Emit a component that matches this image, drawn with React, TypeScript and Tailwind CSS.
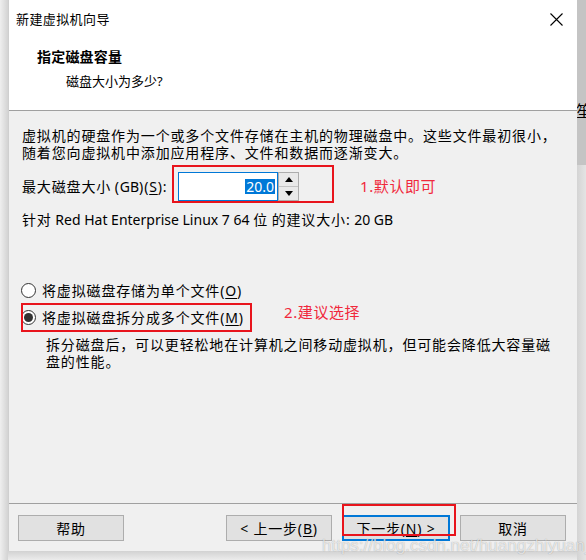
import React from "react";

function T({ s }: { s: string }) {
  const parts = s.split(/([A-Za-z0-9 ]+)/);
  return (
    <>
      {parts.map((p, i) =>
        /^[A-Za-z0-9 ]+$/.test(p) ? (
          <span key={i} className="tracking-normal">
            {p}
          </span>
        ) : (
          <span key={i}>{p}</span>
        )
      )}
    </>
  );
}

function Radio({ checked }: { checked?: boolean }) {
  return (
    <div className="w-[15px] h-[15px] rounded-full border border-[#333333] bg-white flex items-center justify-center shrink-0">
      {checked && <div className="w-[9px] h-[9px] rounded-full bg-[#333333]" />}
    </div>
  );
}

function Btn({ children, primary }: { children: React.ReactNode; primary?: boolean }) {
  return (
    <div
      className={
        primary
          ? "w-[108px] h-[26px] border-2 border-[#0078d7] bg-[#e1e1e1] flex items-center justify-center text-[14px] tracking-[0.8px] whitespace-nowrap"
          : "w-[106px] h-[26px] border border-[#adadad] bg-[#e1e1e1] flex items-center justify-center text-[14px] tracking-[0.8px] whitespace-nowrap"
      }
    >
      {children}
    </div>
  );
}

export default function App() {
  return (
    <div className="w-[586px] h-[560px] flex overflow-hidden bg-[#e6e6e6] relative text-black font-['Noto_Sans','Noto_Sans_CJK_SC',sans-serif]">
      {/* left shadow */}
      <div className="w-[8px] h-full bg-linear-to-r from-[#efefef] to-[#d3d3d3]" />

      <div className="w-[569px] flex flex-col">
        <div className="h-[551px] flex flex-col bg-[#f0f0f0] relative border-l border-[#cfcfcf]">
          {/* header */}
          <div className="h-[111px] bg-white border-b border-[#a0a0a0] flex flex-col shrink-0">
            <div className="h-[38px] flex items-center justify-between pl-[7px] pr-[14px]">
              <span className="text-[13px] tracking-[0.4px] leading-[18px]">新建虚拟机向导</span>
              <svg width="13" height="13" viewBox="0 0 13 13">
                <path d="M0.5 0.5 L12.5 12.5 M12.5 0.5 L0.5 12.5" stroke="#000" strokeWidth="1.1" fill="none" />
              </svg>
            </div>
            <div className="pl-[28px] mt-[9px] text-[14px] font-bold leading-[20px] tracking-[0.2px]">指定磁盘容量</div>
            <div className="pl-[57px] mt-[5px] text-[13px] leading-[18px]">磁盘大小为多少?</div>
          </div>

          {/* body */}
          <div className="flex-1 flex flex-col pl-[13px] text-[14px] tracking-[0.85px] leading-[17px]">
            <p className="mt-[16px] whitespace-nowrap">
              虚拟机的硬盘作为一个或多个文件存储在主机的物理磁盘中。这些文件最初很小，
              <br />
              随着您向虚拟机中添加应用程序、文件和数据而逐渐变大。
            </p>

            <div className="mt-[4px] flex items-start">
              <div className="w-[150px] pt-[13px] whitespace-nowrap">
                <T s="最大磁盘大小 (GB)(" />
                <span className="underline underline-offset-2">S</span>):
              </div>
              <div className="w-[162px] h-[38px] border-2 border-[#e8141c] pl-[4px] pt-[5px]">
                <div className="flex h-[29px]">
                  <div className="w-[100px] h-[29px] border border-[#0078d7] bg-white flex items-center justify-end pr-[2px]">
                    <span className="bg-[#0078d7] text-white text-[14px] leading-[15px] px-[1px] tracking-normal">20.0</span>
                  </div>
                  <div className="w-[21px] h-[29px] border border-[#adadad] flex flex-col">
                    <div className="flex-1 bg-[#e9e9e9] border-b border-[#c4c4c4] flex items-center justify-center">
                      <svg width="8" height="5" viewBox="0 0 8 5">
                        <path d="M0 5 L4 0 L8 5 Z" fill="#000" />
                      </svg>
                    </div>
                    <div className="flex-1 bg-[#e9e9e9] flex items-center justify-center">
                      <svg width="8" height="5" viewBox="0 0 8 5">
                        <path d="M0 0 L8 0 L4 5 Z" fill="#000" />
                      </svg>
                    </div>
                  </div>
                </div>
              </div>
              <div className="ml-[26px] pt-[13px] text-[15px] tracking-[0.6px] text-[#f0283c] whitespace-nowrap">1.默认即可</div>
            </div>

            <div className="mt-[8px] whitespace-nowrap">
              <T s="针对 Red Hat Enterprise Linux 7 64 位 的建议大小: 20 GB" />
            </div>

            <div className="mt-[54px] flex items-center h-[17px] -ml-[1px] gap-[6px] whitespace-nowrap">
              <Radio />
              <span>
                将虚拟磁盘存储为单个文件(<span className="underline underline-offset-2">O</span>)
              </span>
            </div>
            <div className="mt-[10px] flex items-center h-[17px] -ml-[1px] gap-[6px] whitespace-nowrap">
              <Radio checked />
              <span>
                将虚拟磁盘拆分成多个文件(<span className="underline underline-offset-2">M</span>)
              </span>
            </div>
            <p className="mt-[10px] ml-[24px] whitespace-nowrap">
              拆分磁盘后，可以更轻松地在计算机之间移动虚拟机，但可能会降低大容量磁
              <br />
              盘的性能。
            </p>
          </div>

          {/* footer */}
          <div className="h-[48px] shrink-0 border-t border-[#a0a0a0] flex items-start pt-[11px] pl-[9px] pr-[11px]">
            <Btn>帮助</Btn>
            <div className="ml-auto flex gap-[10px]">
              <Btn>
                &lt; 上一步(<span className="underline underline-offset-2">B</span>)
              </Btn>
              <Btn primary>
                下一步(<span className="underline underline-offset-2">N</span>) &gt;
              </Btn>
              <Btn>取消</Btn>
            </div>
          </div>

          {/* annotation overlays */}
          <div className="absolute left-[12px] top-[303px] w-[231px] h-[29px] border-2 border-[#e8141c]" />
          <div className="absolute left-[275px] top-[304px] text-[15px] leading-[17px] tracking-[0.6px] text-[#f0283c] whitespace-nowrap">2.建议选择</div>
          <div className="absolute left-[333px] top-[504px] w-[114px] h-[32px] border-2 border-[#e8141c]" />
        </div>
        <div className="flex-1 bg-linear-to-b from-[#d2d2d2] to-[#ececec]" />
      </div>

      {/* right strip */}
      <div className="w-[9px] flex flex-col">
        <div className="h-[165px] bg-[#c4c4c4] overflow-hidden">
          <div className="mt-[102px] text-[16px] leading-[18px] -ml-[1px]">笙</div>
        </div>
        <div className="flex-1 bg-linear-to-r from-[#d4d4d4] to-[#e4e4e4]" />
      </div>

      {/* watermark */}
      <div className="absolute left-[322px] top-[536px] text-[17px] leading-[20px] whitespace-nowrap font-['Liberation_Sans',sans-serif] text-white/70 [text-shadow:0_0_1px_rgba(0,0,0,0.35)]">
        https://blog.csdn.net/huangzhiyuan_
      </div>
    </div>
  );
}
